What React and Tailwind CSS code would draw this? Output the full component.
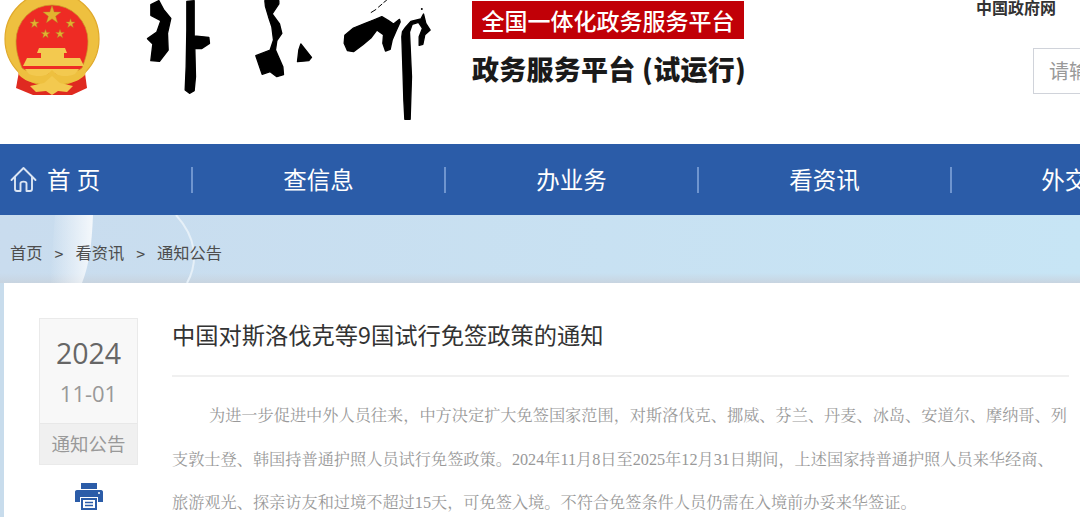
import { useId } from 'react';

const navItems = ['查信息', '办业务', '看资讯', '外交部'];

function Star({ x, y, r }) {
  const pts = [];
  for (let i = 0; i < 10; i++) {
    const a = -Math.PI / 2 + (i * Math.PI) / 5;
    const d = i % 2 === 0 ? r : r * 0.4;
    pts.push(`${x + d * Math.cos(a)},${y + d * Math.sin(a)}`);
  }
  return <polygon points={pts.join(' ')} fill="#e3b22f" stroke="#a88a2a" strokeWidth="0.4" />;
}

// 国徽
function Emblem() {
  return (
    <svg width="104" height="100" viewBox="1 -3 104 100" className="shrink-0">
      <path d="M20 66 L16 88 L33 95 L72 95 L87 88 L84 66 Z" fill="#df2a20" />
      <circle cx="52" cy="39" r="47" fill="#eec03f" stroke="#e0a92a" strokeWidth="1.2" />
      <path d="M16 41 A36 36 0 1 1 88 41 C88 52 85 60 82 68 C72 76 32 76 22 68 C19 60 16 52 16 41 Z" fill="#ee2b24" stroke="#c9962a" strokeWidth="0.7" />
      <Star x={52} y={15} r={9.5} />
      <Star x={34.5} y={23.5} r={4.8} />
      <Star x={70.5} y={23.5} r={4.8} />
      <Star x={45.5} y={34} r={4.6} />
      <Star x={60} y={34} r={4.6} />
      <path d="M39 48 H65 L67 53 H64 V58 H80 L84 66 H23 L27 58 H41 V53 H37 Z" fill="#f3c94f" />
      <path d="M25 69 H79 L75 74 C68 77 62 76 58 75 L52 72 L46 75 C42 76 36 77 29 74 Z" fill="#f3c94f" />
      <path d="M17 68 C22 76 34 82 44 78 L52 70 L60 78 C70 82 82 76 87 68 L85 75 C76 84 66 84 60 81 L52 77 L44 81 C38 84 28 84 19 75 Z" fill="#eec03f" />
      <path d="M30 86 L44 83 L52 76 L60 83 L73 86 L67 92 L58 91 L52 95 L46 91 L36 92 Z" fill="#f3c94f" />
    </svg>
  );
}

// 外交部题字
function CalligraphyLogo() {
  return (
    <svg width="287" height="122" viewBox="438 0 860 366" className="shrink-0">
      <g fill="#000" stroke="#000" strokeWidth="4" strokeLinejoin="round">
        <path d="M452 14 L476 2 L490 28 L512 55 L502 100 L504 150 L478 184 L452 182 L458 132 L442 116 L470 96 L482 62 L452 46 Z" />
        <path d="M560 4 L582 2 L582 108 L626 112 L628 130 L604 146 L584 146 L586 230 L582 272 L568 280 L555 270 L558 200 L560 90 Z" />
        <path d="M794 2 L836 2 L836 12 L816 42 L838 72 L845 100 L830 122 L826 150 L848 200 L850 224 L830 230 L810 215 L786 223 L767 167 L810 150 L820 120 L815 80 L805 50 L796 20 Z" />
        <path d="M902 132 L934 172 L926 182 L892 185 L896 150 Z" />
        <path d="M1034 106 L1060 84 L1095 70 L1120 60 L1145 50 L1165 62 L1180 72 L1198 58 L1200 66 L1188 92 L1176 120 L1170 148 L1156 153 L1148 130 L1150 104 L1130 90 L1112 114 L1088 134 L1060 155 L1042 152 L1032 130 Z" />
        <path d="M1207 95 L1216 82 L1232 64 L1262 57 L1270 42 L1277 70 L1290 90 L1274 104 L1268 133 L1257 136 L1257 110 L1267 85 L1255 67 L1236 73 L1228 96 L1234 230 L1230 358 L1214 358 L1211 300 L1208 200 L1205 110 Z" />
      </g>
      <path d="M1112 38 L1128 28 M1134 22 L1146 12 M1150 8 L1160 0" stroke="#000" strokeWidth="3" fill="none" />
      <circle cx="1265" cy="27" r="3" fill="#000" />
    </svg>
  );
}

function PageHeader() {
  return (
    <header className="flex h-36 overflow-hidden bg-white">
      <div className="-mt-[3px] ml-[1px] shrink-0">
        <Emblem />
      </div>
      <div className="ml-[41px] shrink-0">
        <CalligraphyLogo />
      </div>
      <div className="ml-[39px] w-[273px] shrink-0">
        <div className="mt-[1px] flex h-[38px] w-[272px] items-center justify-center bg-[#c10007] text-[23px] font-medium leading-none text-white">
          全国一体化政务服务平台
        </div>
        <div className="mt-[11px] whitespace-nowrap text-[27px] font-black leading-[38px] tracking-[0.01em] text-[#1a1a1a]">
          政务服务平台 (试运行)
        </div>
      </div>
      <div className="ml-[231px] shrink-0">
        <div className="text-[16px] font-bold leading-[15px] text-[#333]">中国政府网</div>
        <div className="ml-[57px] mt-[33px] flex h-[46px] w-[200px] items-center border border-[#d0d3da] pl-[15px] text-[20px] text-[#999]">
          请输入关键词
        </div>
      </div>
    </header>
  );
}

function MainNav() {
  return (
    <nav className="flex h-[71px] items-center overflow-hidden bg-[#2b5ca8] text-[23.5px] text-white">
      <div className="flex h-[26px] w-[193px] shrink-0 items-center border-r-2 border-[#6f95cf] pl-[10px]">
        <svg width="27" height="27" viewBox="0 0 27 27" fill="none" stroke="#dbe5f3" strokeWidth="1.9" strokeLinejoin="round" strokeLinecap="round">
          <path d="M1.5 14 L13.5 2 L25.5 14" />
          <path d="M5 11.5 V23 C5 24.5 6 25 7 25 H10.5 V17.5 C10.5 15 16.5 15 16.5 17.5 V25 H20 C21 25 22 24.5 22 23 V11.5" />
        </svg>
        <span className="ml-[10px] whitespace-nowrap tracking-[0.02em]">首 页</span>
      </div>
      {navItems.map((item, i) => (
        <div
          key={item}
          className={`flex h-[26px] shrink-0 items-center justify-center whitespace-nowrap ${i < navItems.length - 1 ? 'w-[253px] border-r-2 border-[#6f95cf]' : 'w-[249px]'}`}
        >
          {item}
        </div>
      ))}
    </nav>
  );
}

function Breadcrumb() {
  const gradId = useId();
  return (
    <div className="relative h-[68px] bg-gradient-to-r from-[#c9dcee] to-[#c7e5f5]">
      <div className="absolute inset-x-0 bottom-0 h-[10px] bg-gradient-to-b from-transparent to-[#c8d4e0]" />
      {/* 背景图里的弧线 */}
      <svg className="absolute inset-0" width="240" height="68" viewBox="0 0 240 68" fill="none">
        <defs>
          <linearGradient id={gradId} x1="0" x2="1" y1="0" y2="0">
            <stop offset="0" stopColor="#ffffff" stopOpacity="0" />
            <stop offset="1" stopColor="#ffffff" stopOpacity="0.8" />
          </linearGradient>
        </defs>
        <path d="M55 0 H93 C92 25 90 48 82 68 H50 Z" fill={`url(#${gradId})`} />
        <path d="M176 0 C196 22 199 46 187 68" stroke="#e6f0f8" strokeWidth="2" />
      </svg>
      <div className="relative flex h-full items-center whitespace-nowrap pl-[10px] pt-[7px] text-[16.25px] leading-none text-[#4d4d4d]">
        <span>首页</span>
        <span className="mx-[12px] text-[16px]">&gt;</span>
        <span>看资讯</span>
        <span className="mx-[12px] text-[16px]">&gt;</span>
        <span>通知公告</span>
      </div>
    </div>
  );
}

function DateCard() {
  return (
    <aside className="w-[99px] shrink-0">
      <div className="border border-[#eaeaea] bg-[#f8f8f8]">
        <div className="h-[104px] pt-[15px] text-center font-['Open_Sans','Noto_Sans_CJK_SC',sans-serif]">
          <div className="text-[28.5px] leading-[38px] text-[#666]">2024</div>
          <div className="mt-[6px] text-[22px] leading-[30px] text-[#999]">11-01</div>
        </div>
        <div className="flex h-[41px] items-center justify-center border-t border-[#e8e8e8] bg-[#f0f0f0] text-[18.5px] text-[#999]">
          通知公告
        </div>
      </div>
      <div className="mt-[17px] flex justify-center">
        <svg width="30" height="28" viewBox="0 0 30 28">
          <path d="M7 1 H23 V7 H7 Z" fill="#2b5ca8" />
          <path d="M3 8 H27 C28.5 8 29 9 29 10 V20 H24 V15 H6 V20 H1 V10 C1 9 1.5 8 3 8 Z" fill="#2b5ca8" />
          <path d="M8 17 H22 V27 H8 Z" fill="none" stroke="#2b5ca8" strokeWidth="2" />
          <path d="M11 20.5 H19 M11 23.5 H19" stroke="#2b5ca8" strokeWidth="1.5" />
          <circle cx="25" cy="11" r="1" fill="#fff" />
        </svg>
      </div>
    </aside>
  );
}

function Article() {
  return (
    <article className="ml-[34px] w-[897px] shrink-0">
      <h1 className="-mt-[2px] h-[59px] text-[23.25px] font-normal leading-[36px] text-[#333]">
        中国对斯洛伐克等9国试行免签政策的通知
      </h1>
      <div className="h-[2px] bg-[#f0f0f0]" />
      <div className="mt-[18px] whitespace-nowrap font-['Liberation_Serif','Noto_Serif_CJK_SC','Noto_Sans_CJK_SC',serif] text-[16.2px] leading-[43.5px] text-[#999]">
        <p className="pl-[37px]">为进一步促进中外人员往来，中方决定扩大免签国家范围，对斯洛伐克、挪威、芬兰、丹麦、冰岛、安道尔、摩纳哥、列</p>
        <p>支敦士登、韩国持普通护照人员试行免签政策。2024年11月8日至2025年12月31日期间，上述国家持普通护照人员来华经商、</p>
        <p>旅游观光、探亲访友和过境不超过15天，可免签入境。不符合免签条件人员仍需在入境前办妥来华签证。</p>
      </div>
    </article>
  );
}

export default function App() {
  return (
    <div className="h-[517px] w-[1080px] overflow-hidden bg-[#c8dcec] font-['Noto_Sans_CJK_SC',sans-serif]">
      <PageHeader />
      <MainNav />
      <Breadcrumb />
      <main className="ml-[4px] flex h-[234px] w-[1200px] bg-white pl-[35px] pt-[35px]">
        <DateCard />
        <Article />
      </main>
    </div>
  );
}
